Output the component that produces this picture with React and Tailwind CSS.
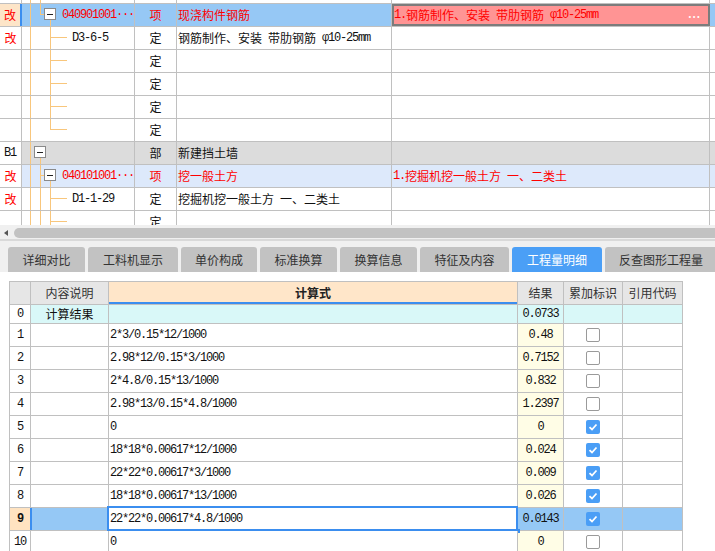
import React from 'react';

const CJK = "[font-family:'Noto_Sans_CJK_SC',sans-serif]";
const MONO = "[font-family:'Liberation_Mono',monospace] text-[12px] tracking-[-1.2px] whitespace-pre";
const ORANGE = '#f8c67c';
const LINE = 'border-[#c0c0c0]';

// split a string into ascii runs (mono, half width) and cjk runs
function Mixed({ text }) {
  const parts = text.match(/[\x20-\x7eφ·]+|[^\x20-\x7eφ·]+/g) || [];
  return parts.map((p, i) =>
    /^[\x20-\x7eφ·]/.test(p) ? (
      <span key={i} className={MONO}>{p}</span>
    ) : (
      <span key={i} className="text-[12px]">{p}</span>
    ),
  );
}

const TREES = {
  top: { w: 40, v: [[8, 0, 22], [18, 0, 22]], h: [] },
  q1: { w: 40, v: [[8, 0, 22], [18, 0, 10], [28, 16, 22]], h: [[18, 22]], box: 22 },
  d: { w: 50, v: [[8, 0, 22], [28, 0, 22]], h: [[28, 45]] },
  dLast: { w: 50, v: [[8, 0, 22], [28, 0, 10]], h: [[28, 45]] },
  b: { w: 40, v: [[8, 0, 22], [18, 16, 22]], h: [], box: 12 },
  q2: { w: 40, v: [[8, 0, 22], [18, 0, 22], [28, 16, 22]], h: [[18, 22]], box: 22 },
  d2: { w: 50, v: [[8, 0, 22], [18, 0, 22], [28, 0, 22]], h: [[28, 45]] },
};

function Tree({ kind, height = 22 }) {
  const t = TREES[kind];
  return (
    <svg width={t.w} height={height} className="shrink-0" shapeRendering="crispEdges">
      {t.v.map(([x, y1, y2], i) => (
        <line key={'v' + i} x1={x + 0.5} x2={x + 0.5} y1={y1} y2={Math.min(y2, height)} stroke={ORANGE} />
      ))}
      {t.h.map(([x1, x2], i) => (
        <line key={'h' + i} x1={x1} x2={x2} y1={10.5} y2={10.5} stroke={ORANGE} />
      ))}
      {t.box !== undefined && (
        <g>
          <rect x={t.box + 0.5} y={4.5} width={11} height={11} fill="#fff" stroke="#8a8a8a" />
          <line x1={t.box + 3} x2={t.box + 9} y1={10.5} y2={10.5} stroke="#222" />
        </g>
      )}
    </svg>
  );
}

const TOP_ROWS = [
  { kind: 'sel', c1: '改', code: '040901001···', type: '项', name: '现浇构件钢筋', feat: '1.钢筋制作、安装 带肋钢筋 φ10-25mm', tree: 'q1' },
  { c1: '改', code: 'D3-6-5', type: '定', name: '钢筋制作、安装 带肋钢筋 φ10-25mm', tree: 'd' },
  { type: '定', tree: 'd' },
  { type: '定', tree: 'd' },
  { type: '定', tree: 'd' },
  { type: '定', tree: 'dLast' },
  { kind: 'part', c1: 'B1', type: '部', name: '新建挡土墙', tree: 'b' },
  { kind: 'item', c1: '改', code: '040101001···', type: '项', name: '挖一般土方', feat: '1.挖掘机挖一般土方 一、二类土', tree: 'q2' },
  { c1: '改', code: 'D1-1-29', type: '定', name: '挖掘机挖一般土方 一、二类土', tree: 'd2' },
  { type: '定', tree: 'd2' },
];

const TOP_COLS = 'grid grid-cols-[22px_113px_42px_215px_318px_1fr]';

function TopRow({ r }) {
  const red = r.kind === 'sel' || r.kind === 'item';
  const bg =
    r.kind === 'sel' ? 'bg-[#96c8f5]' : r.kind === 'part' ? 'bg-[#dcdcdc]' : r.kind === 'item' ? 'bg-[#dde9fb]' : 'bg-white';
  const txt = red ? 'text-[#ff0000]' : 'text-[#111]';
  return (
    <div className={`${TOP_COLS} h-[23px] border-t ${LINE}`}>
      <div
        className={`flex items-center justify-center border-r ${
          r.kind === 'sel' ? 'bg-[#fde5c8] border-r-2 border-r-[#3b8eef]' : `bg-white ${LINE}`
        } ${r.c1 === '改' ? 'text-[#ff0000]' : 'text-[#111]'}`}
      >
        {r.c1 && (r.c1 === 'B1' ? <span className={`${MONO} w-full pl-[4px]`}>B1</span> : <span className="text-[12px]">{r.c1}</span>)}
      </div>
      <div className={`flex items-center border-r ${LINE} ${bg} ${txt}`}>
        <Tree kind={r.tree} />
        {r.code && <Mixed text={r.code} />}
      </div>
      <div className={`flex items-center justify-center border-r ${LINE} ${bg} ${txt} text-[12px]`}>{r.type}</div>
      <div className={`flex items-center pl-[1px] border-r ${LINE} ${bg} ${txt} overflow-hidden whitespace-nowrap`}>
        {r.name && <Mixed text={r.name} />}
      </div>
      {r.kind === 'sel' ? (
        <div className="flex items-center border-2 border-[#7c7c7c] bg-[#ff9494] text-[#ff0000] whitespace-nowrap">
          <Mixed text={r.feat} />
          <span className="ml-auto pr-[7px] text-white text-[10px] leading-none font-bold tracking-[1px] -mt-[3px]">...</span>
        </div>
      ) : (
        <div className={`flex items-center pl-[1px] border-r ${LINE} ${bg} ${txt} whitespace-nowrap`}>
          {r.feat && <Mixed text={r.feat} />}
        </div>
      )}
      <div className={r.kind === 'sel' ? 'bg-[#96c8f5]' : r.kind === 'part' ? 'bg-[#dcdcdc]' : r.kind === 'item' ? 'bg-[#dde9fb]' : 'bg-white'} />
    </div>
  );
}

const TABS = ['详细对比', '工料机显示', '单价构成', '标准换算', '换算信息', '特征及内容', '工程量明细', '反查图形工程量'];
const TAB_W = ['w-[77px]', 'w-[90px]', 'w-[76px]', 'w-[77px]', 'w-[77px]', 'w-[89px]', 'w-[90px]', 'w-[112px]'];

const CALC = [
  { n: '1', f: '2*3/0.15*12/1000', r: '0.48', c: false },
  { n: '2', f: '2.98*12/0.15*3/1000', r: '0.7152', c: false },
  { n: '3', f: '2*4.8/0.15*13/1000', r: '0.832', c: false },
  { n: '4', f: '2.98*13/0.15*4.8/1000', r: '1.2397', c: false },
  { n: '5', f: '0', r: '0', c: true },
  { n: '6', f: '18*18*0.00617*12/1000', r: '0.024', c: true },
  { n: '7', f: '22*22*0.00617*3/1000', r: '0.009', c: true },
  { n: '8', f: '18*18*0.00617*13/1000', r: '0.026', c: true },
  { n: '9', f: '22*22*0.00617*4.8/1000', r: '0.0143', c: true, sel: true },
  { n: '10', f: '0', r: '0', c: false },
];

const BOT_COLS = 'grid grid-cols-[21px_78px_409px_46px_59px_60px]';

function Check({ on }) {
  return on ? (
    <div className="w-[14px] h-[14px] rounded-[2px] bg-[#4a9ef6] flex items-center justify-center">
      <svg width="10" height="10" viewBox="0 0 10 10">
        <path d="M1.5 5.2 L4 7.5 L8.5 2.5" fill="none" stroke="#fff" strokeWidth="1.8" />
      </svg>
    </div>
  ) : (
    <div className="w-[14px] h-[14px] rounded-[2px] bg-white border border-[#9a9a9a]" />
  );
}

function CalcRow({ r }) {
  const cell = `border-r ${LINE} flex items-center`;
  return (
    <div className={`${BOT_COLS} h-[23px] border-t ${LINE}`}>
      <div
        className={`${cell} justify-center ${
          r.sel ? 'bg-[#ffe3c1] border-r-[#3b8eef] font-bold' : 'bg-white'
        }`}
      >
        <span className={`${MONO} ${r.sel ? 'font-bold' : ''}`}>{r.n}</span>
      </div>
      <div className={`${cell} ${r.sel ? 'bg-[#95c8f5] shadow-[inset_1px_0_0_#3b8eef]' : 'bg-white'}`} />
      <div className={`${cell} relative bg-white pl-[1px]`}>
        <span className={`${MONO} text-[#111]`}>{r.f}</span>
        {r.sel && (
          <>
            <div className="absolute -left-[2px] -top-[2px] -right-[1px] -bottom-[1px] border-2 border-[#3b8eef]" />
            <div className="absolute -right-[3px] -bottom-[3px] w-[4px] h-[4px] bg-[#3b8eef]" />
          </>
        )}
      </div>
      <div className={`${cell} justify-center ${r.sel ? 'bg-[#95c8f5]' : 'bg-[#fffde6]'}`}>
        <span className={`${MONO} text-[#111]`}>{r.r}</span>
      </div>
      <div className={`${cell} justify-center ${r.sel ? 'bg-[#95c8f5]' : 'bg-white'}`}>
        <Check on={r.c} />
      </div>
      <div className={`${cell} ${r.sel ? 'bg-[#95c8f5]' : 'bg-white'}`} />
    </div>
  );
}

export default function App() {
  return (
    <div className={`w-[715px] h-[551px] overflow-hidden bg-white ${CJK} text-[12px] text-[#111]`}>
      {/* upper bill grid */}
      <div className="h-[225px] overflow-hidden">
        <div className={`${TOP_COLS} h-[3px]`}>
          <div className={`border-r ${LINE}`} />
          <div className={`border-r ${LINE} flex`}>
            <Tree kind="top" height={3} />
          </div>
          <div className={`border-r ${LINE}`} />
          <div className={`border-r ${LINE}`} />
          <div className={`border-r ${LINE}`} />
          <div />
        </div>
        {TOP_ROWS.map((r, i) => (
          <TopRow key={i} r={r} />
        ))}
      </div>

      {/* horizontal scrollbar */}
      <div className="h-[14px] bg-[#f0f0f0] flex items-start pt-[3px]">
        <svg width="14" height="10" className="shrink-0">
          <path d="M8 2 L4 5 L8 8 Z" fill="#555" />
        </svg>
        <div className="flex-1 h-[10px] rounded-l-[5px] bg-[#c2c2c2]" />
      </div>
      <div className="h-[2px] bg-[#d9d9d9]" />

      {/* tabs */}
      <div className="h-[31px] bg-[#f0f0f0] flex items-end gap-[3px] pl-[8px]">
        {TABS.map((t, i) => (
          <div
            key={t}
            className={`${TAB_W[i]} shrink-0 h-[25px] rounded-t-[3px] flex items-center justify-center text-[12px] ${
              t === '工程量明细' ? 'bg-[#4b9ff6] text-white' : 'bg-[#c2c2c2] text-[#333]'
            }`}
          >
            {t}
          </div>
        ))}
      </div>

      {/* quantity detail table */}
      <div className="pt-[9px] pl-[9px]">
        <div className={`w-[674px] border-l ${LINE}`}>
          <div className={`${BOT_COLS} h-[23px] border-t ${LINE} text-[#333]`}>
            <div className={`border-r ${LINE} bg-[#e6e6e6]`} />
            <div className={`border-r ${LINE} bg-[#e6e6e6] flex items-center justify-center`}>内容说明</div>
            <div className={`border-r ${LINE} bg-[#ffe6c9] shadow-[inset_0_-2px_0_#3b8eef] flex items-center justify-center font-bold text-[#222]`}>
              计算式
            </div>
            <div className={`border-r ${LINE} bg-[#e6e6e6] flex items-center justify-center`}>结果</div>
            <div className={`border-r ${LINE} bg-[#e6e6e6] flex items-center justify-center`}>累加标识</div>
            <div className={`border-r ${LINE} bg-[#e6e6e6] flex items-center justify-center`}>引用代码</div>
          </div>
          <div className={`${BOT_COLS} h-[19px] border-t ${LINE}`}>
            <div className={`border-r ${LINE} bg-white flex items-center justify-center`}>
              <span className={MONO}>0</span>
            </div>
            <div className={`border-r ${LINE} bg-[#d9f8f8] flex items-center justify-center`}>计算结果</div>
            <div className={`border-r ${LINE} bg-[#d9f8f8]`} />
            <div className={`border-r ${LINE} bg-[#d9f8f8] flex items-center justify-center`}>
              <span className={MONO}>0.0733</span>
            </div>
            <div className={`border-r ${LINE} bg-[#d9f8f8]`} />
            <div className={`border-r ${LINE} bg-[#d9f8f8]`} />
          </div>
          {CALC.map((r) => (
            <CalcRow key={r.n} r={r} />
          ))}
        </div>
      </div>
    </div>
  );
}
